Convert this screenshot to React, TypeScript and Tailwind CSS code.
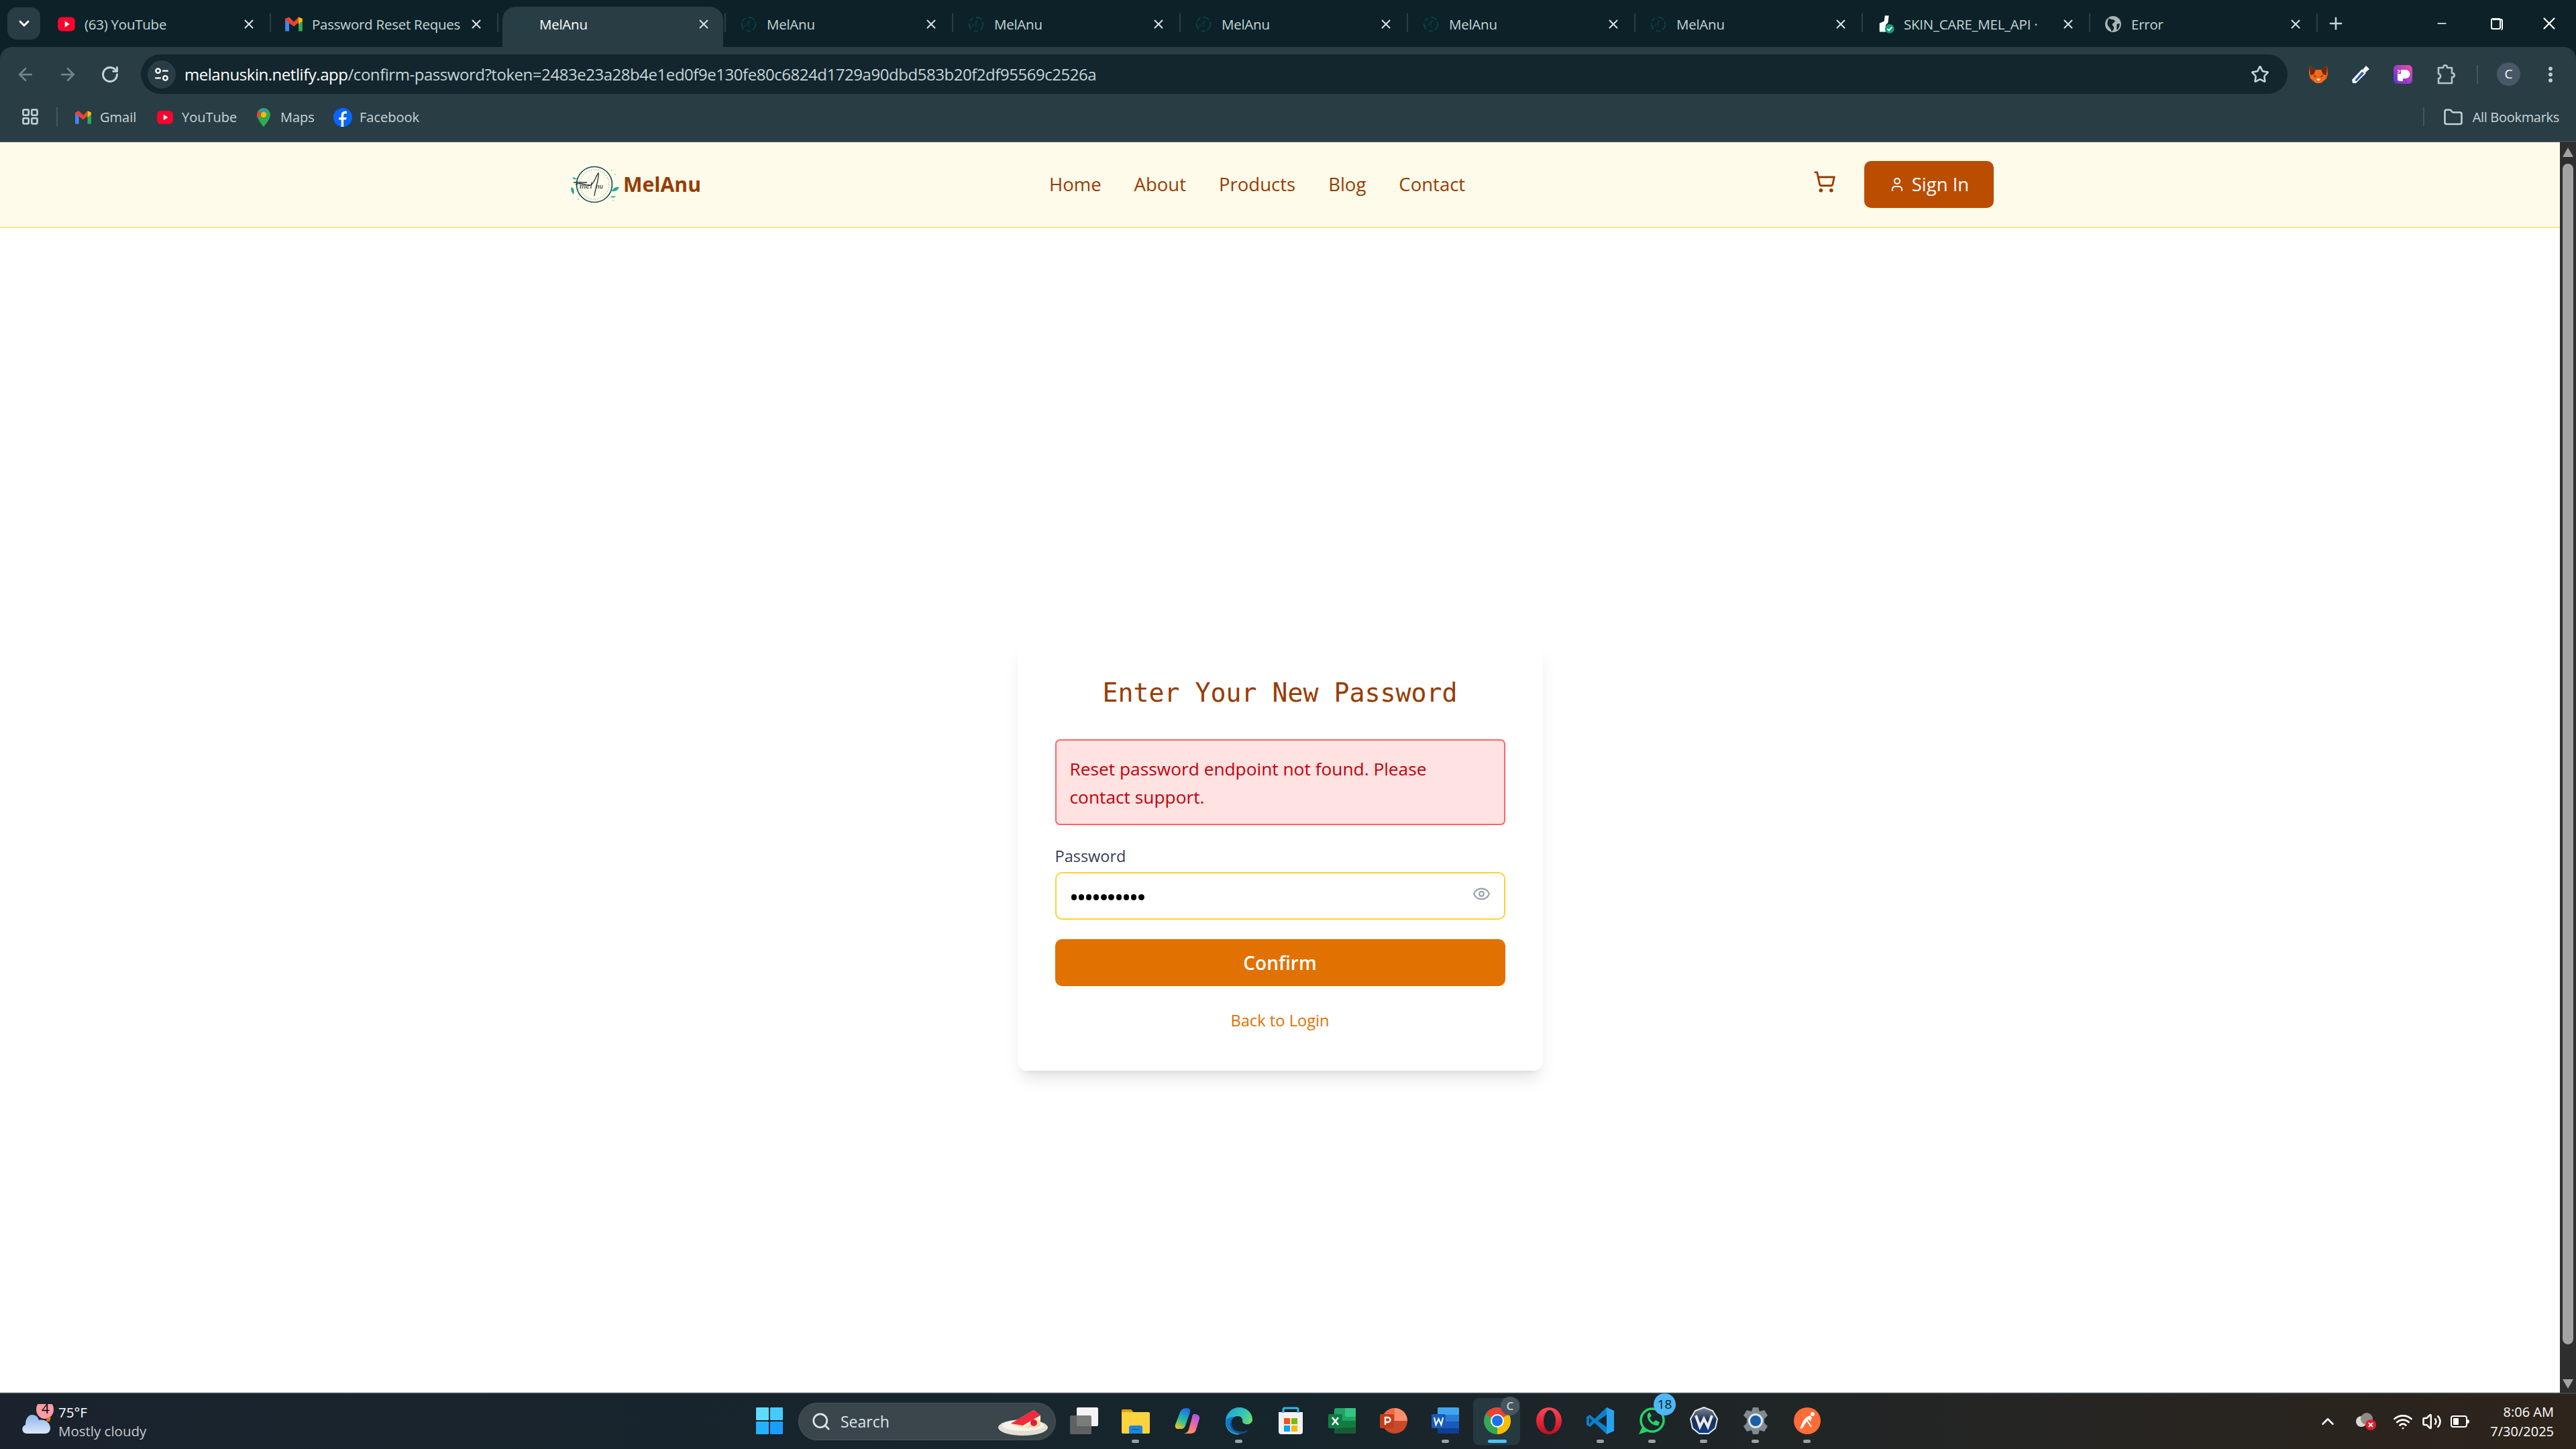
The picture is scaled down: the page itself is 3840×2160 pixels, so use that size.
import React from "react";
import { ArrowLeft, ArrowRight, RotateCw, Star, Eye, ShoppingCart, User, X, Plus, Minus, ChevronDown, ChevronUp, Folder, Search, Wifi, Volume2, EllipsisVertical, LayoutGrid } from "lucide-react";

const ui = "font-['Open_Sans',sans-serif]";

function Youtube({ size = 24 }: { size?: number }) {
  return (
    <svg width={size} height={size} viewBox="0 0 24 24">
      <rect x="1" y="3" width="22" height="18" rx="5" fill="#f8042e" />
      <path d="M10 8l6 4-6 4z" fill="#fff" />
    </svg>
  );
}

function Gmail({ size = 26 }: { size?: number }) {
  return (
    <svg width={size} height={size} viewBox="0 0 24 24" fill="none">
      <path d="M1 6v15h5V10z" fill="#4285f4" />
      <path d="M23 6v15h-5V10z" fill="#34a853" />
      <path d="M1 5l5-2 6 6 6-6 0 7-6 5-11-8z" fill="#ea4335" />
      <path d="M18 3l5 2v3l-5 4z" fill="#fbbc04" />
    </svg>
  );
}

function Spinner() {
  return (
    <svg width="26" height="26" viewBox="0 0 24 24" fill="none" stroke="#0d4f4c" strokeWidth="1.2">
      <circle cx="12" cy="12" r="9.5" strokeDasharray="9 3 6 4" />
      <path d="M5 15c4-1 8-6 10-9M12 7v9" strokeWidth="0.7" />
    </svg>
  );
}

function LogoMark() {
  return (
    <svg width="74" height="60" viewBox="0 0 74 60" fill="none">
      <circle cx="36" cy="30" r="26.5" stroke="#14524e" strokeWidth="1.7" />
      <circle cx="36" cy="30" r="22" stroke="#9cb5ae" strokeWidth="1.2" strokeDasharray="1.5 2" />
      <path d="M8 30c10-5 16 3 22 1s8-14 12-18c2 5-5 24-6 34M5 27c7-1 14 0 20 0" stroke="#1e2a2c" strokeWidth="1.3" />
      <text x="14" y="36" fontSize="13" fontStyle="italic" fill="#17282a" fontFamily="'Liberation Serif',serif">mel</text>
      <text x="38" y="36" fontSize="11" fontStyle="italic" fill="#17282a" fontFamily="'Liberation Serif',serif">nu</text>
      <path d="M2 34c3 1 5 5 3 11-3-3-5-7-3-11zM62 40c2-5 6-7 11-6-2 5-6 7-11 6zM3 20c3-1 5 0 7 2-3 1-5 0-7-2zM60 48c3-1 6-1 8 0-3 2-6 2-8 0z" fill="#2aa894" />
      <g fill="#8fd0c4">
        <circle cx="62" cy="9" r="1" /><circle cx="67" cy="15" r="1" /><circle cx="12" cy="52" r="1" /><circle cx="64" cy="54" r="1" />
      </g>
    </svg>
  );
}

function Tab({ title, icon, active }: { title: string; icon: React.ReactNode; active?: boolean }) {
  return (
    <div className="relative flex h-[60px] w-[339px] flex-none items-center pb-[8px] pl-[20px] pr-[20px]">
      {active && <div className="absolute inset-y-0 left-[6px] right-[4px] rounded-t-[20px] bg-[#293d45]" />}
      <span className="relative flex w-[28px] flex-none items-center justify-center">{icon}</span>
      <span className={`relative ml-[13px] w-[226px] flex-none whitespace-nowrap text-[20.500px] tracking-[-0.25px] ${active ? "text-white" : "text-[#c4d5d8]"}`}>{title}</span>
      <X size={22} strokeWidth={2.2} className="relative ml-[8px] flex-none text-[#d7e3e5]" />
      <span className="absolute right-0 top-[10px] h-[28px] w-[2px] bg-[#2b3f47]" />
    </div>
  );
}

function Bookmark({ icon, label, width }: { icon: React.ReactNode; label: string; width: string }) {
  return (
    <div className={`flex flex-none items-center ${width}`}>
      <span className="flex w-[28px] flex-none justify-center">{icon}</span>
      <span className="ml-[11px] text-[20px] text-[#c8d6d9]">{label}</span>
    </div>
  );
}

function TaskIcon({ children, dot, active }: { children: React.ReactNode; dot?: boolean; active?: boolean }) {
  return (
    <div className="relative flex h-[70px] w-[77px] flex-none items-center justify-center">
      {active && <span className="absolute inset-y-0 left-[3px] right-[4px] rounded-[8px] bg-[#263840]" />}
      <svg width="42" height="42" viewBox="0 0 42 42" fill="none" className="relative mb-[2px]">{children}</svg>
      {dot && <span className="absolute bottom-[3px] h-[5px] w-[11px] rounded-full bg-[#98a3a8]" />}
      {active && <span className="absolute bottom-[3px] h-[5px] w-[28px] rounded-full bg-[#4cc2ff]" />}
    </div>
  );
}

export default function App() {
  return (
    <div className={`flex h-[2160px] w-[3840px] flex-col overflow-hidden bg-[#0c2228] ${ui}`}>
      {/* tab strip */}
      <div className="flex h-[70px] flex-none items-end bg-[#0c2228]">
        <div className="mb-[11px] ml-[11px] flex h-[48px] w-[49px] flex-none items-center justify-center rounded-[14px] bg-[#293d45]">
          <ChevronDown size={24} strokeWidth={3} className="text-white" />
        </div>
        <div className="ml-[5px] flex">
          <Tab title="(63) YouTube" icon={<Youtube size={28} />} />
          <Tab title="Password Reset Reques" icon={<Gmail size={28} />} />
          <Tab title="MelAnu" icon={<Spinner />} active />
          <Tab title="MelAnu" icon={<Spinner />} />
          <Tab title="MelAnu" icon={<Spinner />} />
          <Tab title="MelAnu" icon={<Spinner />} />
          <Tab title="MelAnu" icon={<Spinner />} />
          <Tab title="MelAnu" icon={<Spinner />} />
          <Tab
            title="SKIN_CARE_MEL_API ·"
            icon={
              <svg width="28" height="30" viewBox="0 0 24 26">
                <path d="M4 23V12l6-3 1-7 5 0-1 9-3 3v9z" fill="#fff" />
                <circle cx="17" cy="19" r="6" fill="#0f9d75" />
                <path d="M14 19l2.200 2.200L20 16.800" stroke="#fff" strokeWidth="1.6" fill="none" />
              </svg>
            }
          />
          <Tab
            title="Error"
            icon={
              <svg width="26" height="26" viewBox="0 0 24 24">
                <circle cx="12" cy="12" r="11" fill="#aab4b8" />
                <path d="M6 4c3 2 6 1 8 3s-2 3-3 5 3 3 2 6-2 3-3 4c-1-4-3-5-5-8s0-7 1-10zM17 12l4-1c0 4-1 7-4 9z" fill="#0c2228" />
              </svg>
            }
          />
        </div>
        <div className="mb-[11px] ml-[13px] flex h-[48px] items-center">
          <Plus size={28} strokeWidth={2.2} className="text-[#c4d5d8]" />
        </div>
        <div className="ml-auto mb-[23px] flex h-[24px] items-center text-white">
          <span className="flex w-[80px] justify-center"><Minus size={20} strokeWidth={2} /></span>
          <span className="relative flex w-[80px] justify-center">
            <span className="h-[17px] w-[15px] rounded-[3px] border-2 border-white" />
            <span className="absolute left-[36px] top-[1px] h-[17px] w-[15px] rounded-[3px] border-t-2 border-r-2 border-white" />
          </span>
          <span className="flex w-[80px] justify-center"><X size={30} strokeWidth={1.7} /></span>
        </div>
      </div>

      {/* toolbar */}
      <div className="flex h-[70px] flex-none items-center rounded-t-[18px] bg-[#293d45] pt-[11px]">
        <div className="flex w-[210px] flex-none items-center text-[#c4d5d8]">
          <ArrowLeft size={30} strokeWidth={2.2} className="ml-[23px] text-[#70848b]" />
          <ArrowRight size={30} strokeWidth={2.2} className="ml-[33px] text-[#70848b]" />
          <RotateCw size={28} strokeWidth={2.4} className="ml-[34px]" />
        </div>
        <div className="flex h-[59px] w-[3200px] flex-none items-center rounded-full bg-[#13262e] pl-[10px]">
          <div className="flex h-[42px] w-[42px] flex-none items-center justify-center rounded-full bg-[#293d45]">
            <svg width="26" height="26" viewBox="0 0 24 24" fill="none" stroke="#fff" strokeWidth="2.2">
              <circle cx="7" cy="7" r="3" />
              <path d="M13 7h8M3 17h8" />
              <circle cx="17" cy="17" r="3" />
            </svg>
          </div>
          <div className="ml-[13px] flex-1 whitespace-nowrap text-[24px] tracking-[-0.46px] text-white">
            melanuskin.netlify.app<span className="text-[#c4d5d8]">/confirm-password?token=2483e23a28b4e1ed0f9e130fe80c6824d1729a90dbd583b20f2df95569c2526a</span>
          </div>
          <Star size={28} strokeWidth={2.2} className="mr-[27px] flex-none text-[#c8d6d9]" />
        </div>
        <div className="flex flex-1 items-center text-[#c4d5d8]">
          <svg width="28" height="28" viewBox="0 0 28 28" className="ml-[32px] flex-none">
            <path d="M1 1l9 6h8l9-6 1 12-2 7-7 6-2 1h-6l-2-1-7-6-2-7z" fill="#f6681a" />
            <path d="M1 1l9 6-3 7-5 1zM27 1l-9 6 3 7 5 1z" fill="#6e2a10" />
            <path d="M11 21l3 3 3-3-3-1z" fill="#f2efe9" />
            <path d="M7 15l4 2-2 1zM21 15l-4 2 2 1z" fill="#2a1a14" />
          </svg>
          <svg width="30" height="30" viewBox="0 0 30 30" className="ml-[34px] flex-none" fill="none">
            <path d="M3 28l-1-5L17 7l6 6L8 28z" fill="#f2f5f6" />
            <path d="M6 24l11-13 3 2L9 25z" fill="#2f50bb" />
            <path d="M18 8l5-6 5 5-6 5z" fill="#fff" />
          </svg>
          <svg width="28" height="28" viewBox="0 0 28 28" className="ml-[34px] flex-none">
            <defs>
              <linearGradient id="pg" x1="0" y1="1" x2="1" y2="0">
                <stop offset="0" stopColor="#5a2fe0" />
                <stop offset="1" stopColor="#ee4fa8" />
              </linearGradient>
            </defs>
            <rect width="28" height="28" rx="6" fill="url(#pg)" />
            <path d="M6 13h5V7h7a6.500 6.500 0 010 13h-4v3a1 1 0 01-1 1H9c-2 0-3-1-3-3z" fill="#fff" />
            <path d="M6 7h3L6 10zM6 11.500L10 7v3l-4 3z" fill="#f9c9e6" />
          </svg>
          <svg width="30" height="32" viewBox="0 0 30 32" fill="none" stroke="#b4c6ca" strokeWidth="2.600" className="ml-[36px] flex-none" strokeLinejoin="round">
            <path d="M3 6h7c0-5 6-5 6 0h7v8c5 0 5 6 0 6v9H3v-7c4 0 4-7 0-7z" />
          </svg>
          <span className="ml-[30px] h-[28px] w-[2px] flex-none bg-[#44575f]" />
          <span className="ml-[28px] flex h-[35px] w-[35px] flex-none items-center justify-center rounded-full bg-[#475964] text-[19px] text-white">C</span>
          <EllipsisVertical size={30} strokeWidth={2.6} className="ml-[30px] flex-none" />
        </div>
      </div>

      {/* bookmarks */}
      <div className="flex h-[72px] flex-none items-start border-b-2 border-[#3e4a4c] bg-[#293d45] pt-[20px]">
        <LayoutGrid size={28} strokeWidth={2.2} className="ml-[31px] flex-none text-[#c4d5d8]" />
        <span className="ml-[25px] h-[28px] w-[2px] flex-none bg-[#44575f]" />
        <div className="ml-[24px] flex">
          <Bookmark icon={<Gmail size={26} />} label="Gmail" width="w-[122px]" />
          <Bookmark icon={<Youtube size={26} />} label="YouTube" width="w-[147px]" />
          <Bookmark icon={<svg width="24" height="30" viewBox="0 0 24 30"><path d="M12 1a10 10 0 00-10 10c0 7 10 18 10 18s10-11 10-18A10 10 0 0012 1z" fill="#34a853" /><path d="M4 5l5 5-6 6c-2-4-1-8 1-11z" fill="#ea4335" /><path d="M9 2l7 2-6 5z" fill="#4285f4" /><circle cx="12" cy="11" r="4" fill="#fbbc04" /></svg>} label="Maps" width="w-[118px]" />
          <Bookmark icon={<svg width="28" height="28" viewBox="0 0 24 24"><circle cx="12" cy="12" r="12" fill="#0866ff" /><path d="M10 24v-9H7v-3h3V9c0-3 2-5 5-5h2v3h-2c-1 0-2 1-2 2v3h4l-1 3h-3v9z" fill="#fff" /></svg>} label="Facebook" width="w-[120px]" />
        </div>
        <span className="ml-auto h-[28px] w-[2px] flex-none bg-[#44575f]" />
        <Folder size={30} strokeWidth={2} className="ml-[28px] flex-none text-[#c4d5d8]" />
        <span className="ml-[14px] mr-[25px] text-[20px] tracking-[-0.3px] text-[#c8d6d9]">All Bookmarks</span>
      </div>

      {/* page */}
      <div className="flex min-h-0 flex-1 bg-white">
        <div className="flex min-w-0 flex-1 flex-col">
          <header className="flex h-[128px] flex-none items-center justify-between border-b-2 border-amber-200 bg-amber-50 pl-[850px] pr-[844px]">
            <div className="flex items-center">
              <LogoMark />
              <span className="ml-[5px] text-[30.200px] font-bold text-amber-800">MelAnu</span>
            </div>
            <nav className="flex gap-[49px] text-[27.500px] font-medium text-amber-800">
              <span>Home</span>
              <span>About</span>
              <span>Products</span>
              <span>Blog</span>
              <span>Contact</span>
            </nav>
            <div className="flex items-center">
              <ShoppingCart size={34} strokeWidth={2} className="mb-[8px] text-amber-800" />
              <button className="ml-[42px] flex h-[70px] w-[193px] items-center justify-center gap-[10px] rounded-[10px] bg-amber-700 text-[27.500px] font-medium text-white">
                <User size={24} strokeWidth={2} />
                Sign In
              </button>
            </div>
          </header>

          <main className="flex flex-1 justify-center pt-[620px]">
            <div className="flex h-[636px] w-[783px] flex-col rounded-[14px] bg-white px-[56px] pt-[53px] shadow-[0_17px_26px_-5px_rgba(0,0,0,0.1),0_7px_10px_-7px_rgba(0,0,0,0.1)]">
              <h1 className="text-center font-['DejaVu_Sans_Mono',monospace] text-[38.200px] leading-[40px] text-amber-800">Enter Your New Password</h1>
              <div className="mt-[49px] h-[128px] rounded-[7px] border-2 border-red-400 bg-red-100 pl-[20px] pr-[40px] pt-[21px] text-[26.300px] leading-[42px] text-red-700">
                Reset password endpoint not found. Please contact support.
              </div>
              <label className="mt-[30px] text-[23.500px] font-medium leading-[32px] text-gray-700">Password</label>
              <div className="relative mt-[8px] flex h-[71px] items-center rounded-[10px] border-2 border-amber-300 px-[22px]">
                <span className="flex gap-[2.800px] pt-[4px]">
                  {Array.from({ length: 10 }).map((_, i) => (
                    <span key={i} className="h-[8.400px] w-[8.400px] rounded-full bg-black" />
                  ))}
                </span>
                <Eye size={27} strokeWidth={2} className="absolute right-[20px] top-[17px] text-gray-400" />
              </div>
              <button className="mt-[29px] h-[70px] rounded-[10px] bg-amber-600 text-[28px] font-semibold text-white">Confirm</button>
              <div className="mt-[34px] text-center text-[23.700px] text-amber-600">Back to Login</div>
            </div>
          </main>
        </div>

        {/* scrollbar */}
        <div className="flex w-[24px] flex-none flex-col items-center bg-[#2e2e2e] pt-[8px]">
          <span className="h-0 w-0 border-x-[8px] border-b-[14px] border-x-transparent border-b-[#a3a3a3]" />
          <span className="mt-[10px] h-[1760px] w-[16px] rounded-full bg-[#a3a3a3]" />
          <span className="mt-auto mb-[6px] h-0 w-0 border-x-[8px] border-t-[14px] border-x-transparent border-t-[#a3a3a3]" />
        </div>
      </div>

      {/* taskbar */}
      <div className="flex h-[84px] flex-none items-center border-t-2 border-[#3a4347] bg-linear-to-r from-[#1a232d] via-[#16252c] to-[#2e241b]">
        <div className="relative flex w-[1108px] flex-none items-center pl-[32px]">
          <svg width="48" height="52" viewBox="0 0 48 52" className="flex-none">
            <defs>
              <linearGradient id="cloud" x1="0" y1="0" x2="0" y2="1">
                <stop offset="0" stopColor="#8fb4ec" />
                <stop offset="1" stopColor="#dbe7f7" />
              </linearGradient>
            </defs>
            <ellipse cx="35" cy="8" rx="13" ry="14" fill="#fb9ba4" />
            <path d="M38 20l6 0-2 6-5 0z" fill="#e8701a" />
            <path d="M8 44c-8 0-9-11-2-13 0-9 4-15 10-15 6 0 9 4 10 8 8-2 16 3 17 11 0 6-3 9-8 9z" fill="url(#cloud)" />
          </svg>
          <span className="absolute left-[62px] top-[-5px] text-[20px] leading-[28px] text-black">4</span>
          <div className="ml-[7px] flex flex-col text-[20.500px] leading-[28px]">
            <span className="text-white">75°F</span>
            <span className="text-[#c6c9cc]">Mostly cloudy</span>
          </div>
        </div>

        <div className="flex items-center">
          <TaskIcon>
            <rect x="1" y="1" width="19" height="19" rx="1" fill="#5fdcff" />
            <rect x="22" y="1" width="19" height="19" rx="1" fill="#45ccff" />
            <rect x="1" y="22" width="19" height="19" rx="1" fill="#24b1ff" />
            <rect x="22" y="22" width="19" height="19" rx="1" fill="#1b9dff" />
          </TaskIcon>
          <div className="ml-[5px] mr-[3px] flex h-[56px] w-[384px] flex-none items-center rounded-full border border-[#4a555a] bg-[#3a464c] pl-[18px]">
            <Search size={30} strokeWidth={2.2} className="flex-none text-[#dde3e5]" />
            <span className="ml-[14px] flex-1 text-[23px] text-[#dde3e5]">Search</span>
            <svg width="76" height="42" viewBox="0 0 76 42" className="mr-[10px] flex-none">
              <ellipse cx="38" cy="30" rx="37" ry="12" fill="#e4ded2" />
              <ellipse cx="38" cy="27" rx="31" ry="8" fill="#f6f3ec" />
              <path d="M20 24L54 4l10 8v16c-14 5-32 3-44-4z" fill="#f8dca6" />
              <path d="M20 24L54 4l10 8-26 15z" fill="#ee2b40" />
              <path d="M38 27l26-15v5L38 31z" fill="#fff2d8" />
              <circle cx="54" cy="23" r="5" fill="#d9213c" />
            </svg>
          </div>
          <TaskIcon>
            <rect x="10" y="1" width="32" height="28" rx="2" fill="#f3f3f3" />
            <rect x="0" y="13" width="32" height="28" rx="2" fill="#6a6a6a" fillOpacity="0.88" />
          </TaskIcon>
          <TaskIcon dot>
            <path d="M0 6a2 2 0 012-2h12l3 4h23a2 2 0 012 2v28a2 2 0 01-2 2H2a2 2 0 01-2-2z" fill="#ffd23f" />
            <path d="M0 6a2 2 0 012-2h12l3 4H0z" fill="#e0a10f" />
            <path d="M11 40v-9a3 3 0 013-3h14a3 3 0 013 3v9z" fill="#1c87d8" />
            <rect x="16" y="33" width="10" height="1.500" fill="#0e5ea6" />
          </TaskIcon>
          <TaskIcon>
            <defs>
              <linearGradient id="cpl" x1="0.6" y1="0" x2="0.2" y2="1">
                <stop offset="0" stopColor="#1f6fe8" />
                <stop offset="0.55" stopColor="#25c0a0" />
                <stop offset="1" stopColor="#f5c518" />
              </linearGradient>
              <linearGradient id="cpr" x1="0.8" y1="0" x2="0.3" y2="1">
                <stop offset="0" stopColor="#a457e8" />
                <stop offset="0.55" stopColor="#f06aa0" />
                <stop offset="1" stopColor="#ff9a4d" />
              </linearGradient>
            </defs>
            <path d="M20 2c-6 0-9 3-11 9L3 27c-1 4 1 6 5 6h4c3 0 5-2 6-5l7-20c1-3-1-6-5-6z" fill="url(#cpl)" />
            <path d="M31 11c5 0 9 2 8 7l-5 16c-1 4-4 6-8 6H15c4 0 7-3 8-6l5-18c0-2 1-5 3-5z" fill="url(#cpr)" />
          </TaskIcon>
          <TaskIcon dot>
            <defs>
              <linearGradient id="edg" x1="0" y1="0" x2="1" y2="0.6">
                <stop offset="0" stopColor="#1b9de2" />
                <stop offset="0.6" stopColor="#35c6b4" />
                <stop offset="1" stopColor="#7fe05d" />
              </linearGradient>
            </defs>
            <path d="M1 20C2 9 11 1 21 1c11 0 20 8 20 18 0 5-5 8-10 7-4-1-5-3-5-6 0-3-2-6-7-6-7 0-11 7-9 14 1 7 7 12 13 13-5 1-8 0-11-1C5 37 0 30 1 20z" fill="url(#edg)" />
            <path d="M1 20c0 10 6 18 15 20 4 1 10 1 19-5-8 4-17 3-22-2-5-6-4-14 1-18-6 0-11 2-13 5z" fill="#0f78c8" />
            <path d="M14 15c-5 4-6 12-1 18 4 5 13 7 22 2-5 5-10 6-14 5-8-2-12-7-13-13 0-5 2-10 6-12z" fill="#114a94" />
          </TaskIcon>
          <TaskIcon>
            <path d="M3 8h36v29a4 4 0 01-4 4H7a4 4 0 01-4-4z" fill="#f1f1f1" />
            <path d="M10 9V4a2 2 0 012-2h18a2 2 0 012 2v5" stroke="#2fb6ea" strokeWidth="3" />
            <rect x="11" y="17" width="9" height="9" fill="#f25022" />
            <rect x="22" y="17" width="9" height="9" fill="#7fba00" />
            <rect x="11" y="28" width="9" height="9" fill="#00a4ef" />
            <rect x="22" y="28" width="9" height="9" fill="#ffb900" />
          </TaskIcon>
          <TaskIcon>
            <rect x="9" y="2" width="32" height="38" rx="3" fill="#21a366" />
            <rect x="25" y="2" width="16" height="13" fill="#33c481" />
            <rect x="9" y="21" width="32" height="10" fill="#107c41" />
            <rect x="9" y="31" width="32" height="9" fill="#185c37" />
            <rect x="0" y="11" width="21" height="21" rx="2" fill="#107c41" />
            <path d="M6 16l9 11M15 16l-9 11" stroke="#fff" strokeWidth="2.600" />
          </TaskIcon>
          <TaskIcon>
            <circle cx="22" cy="21" r="19" fill="#c9492a" />
            <path d="M22 2a19 19 0 0119 19H22z" fill="#ff8f6b" />
            <path d="M22 2a19 19 0 00-19 19h19z" fill="#ed6c47" />
            <rect x="0" y="11" width="21" height="21" rx="2" fill="#c43e1c" />
            <path d="M8 27V16h4a3.500 3.500 0 010 7H8" stroke="#fff" strokeWidth="2.400" fill="none" />
          </TaskIcon>
          <TaskIcon dot>
            <rect x="9" y="1" width="32" height="39" rx="3" fill="#2b7cd3" />
            <rect x="9" y="1" width="32" height="11" rx="2" fill="#41a5ee" />
            <rect x="9" y="22" width="32" height="10" fill="#185abd" />
            <rect x="9" y="32" width="32" height="8" fill="#103f91" />
            <rect x="0" y="11" width="21" height="21" rx="2" fill="#185abd" />
            <path d="M4 16l2.500 11 4-9 4 9 2.500-11" stroke="#fff" strokeWidth="2" fill="none" />
          </TaskIcon>
          <div className="relative">
            <TaskIcon active>
              <circle cx="21" cy="21" r="20" fill="#34a853" />
              <path d="M21 21L3.700 11A20 20 0 0138.300 11z" fill="#ea4335" />
              <path d="M21 21L38.300 11A20 20 0 0121 41z" fill="#fbbc04" />
              <circle cx="21" cy="21" r="10" fill="#fff" />
              <circle cx="21" cy="21" r="8" fill="#1a73e8" />
            </TaskIcon>
            <span className="absolute right-[5px] top-[-2px] flex h-[28px] w-[28px] items-center justify-center rounded-full bg-[#47565e] text-[17px] font-semibold text-[#c8d0d4]">C</span>
          </div>
          <TaskIcon>
            <defs>
              <linearGradient id="op" x1="0" y1="0" x2="0" y2="1">
                <stop offset="0" stopColor="#ff4757" />
                <stop offset="1" stopColor="#c70a1d" />
              </linearGradient>
            </defs>
            <ellipse cx="21" cy="21" rx="19" ry="20" fill="url(#op)" />
            <ellipse cx="22" cy="21" rx="9" ry="16" fill="#16252c" />
          </TaskIcon>
          <TaskIcon dot>
            <path d="M30 1L12 18 5 12 0 15v12l5 3 7-6 18 17 11-5V6z" fill="#0e7fc9" />
            <path d="M30 12L17 21l13 9z" fill="#16252c" />
            <path d="M4 16l4 5-4 5z" fill="#16252c" />
            <path d="M30 1l11 5v30l-11 5z" fill="#24a4ee" />
            <path d="M30 12v18l-4-3V15z" fill="#16252c" />
          </TaskIcon>
          <div className="relative">
            <TaskIcon dot>
              <circle cx="21" cy="20" r="17" fill="none" stroke="#25d366" strokeWidth="3.500" />
              <path d="M7 28l-6 13 13-4z" fill="#25d366" />
              <path d="M14 11c-2 9 7 18 16 17l2-5-6-3-3 3c-3-1-5-4-6-7l3-2-3-6z" fill="#25d366" />
            </TaskIcon>
            <span className="absolute right-[3px] top-[-7px] flex h-[33px] w-[33px] items-center justify-center rounded-full bg-[#4db8f5] text-[19px] text-[#0e1a20]">18</span>
          </div>
          <TaskIcon dot>
            <defs>
              <linearGradient id="wn" x1="0" y1="0" x2="0" y2="1">
                <stop offset="0" stopColor="#7c8896" />
                <stop offset="0.5" stopColor="#1d2d52" />
                <stop offset="1" stopColor="#0f3f94" />
              </linearGradient>
            </defs>
            <path d="M21 1l13 5 7 12-3 14-10 8H14L4 32 1 18 8 6z" fill="url(#wn)" stroke="#e8ecef" strokeWidth="2" />
            <path d="M9 13l6 17 6-12 6 12 6-17" stroke="#e8ecef" strokeWidth="4" fill="none" />
          </TaskIcon>
          <TaskIcon dot>
            <path d="M17 1h8l2 6 7-2 5 8-5 5v6l5 5-5 8-7-2-2 6h-8l-2-6-7 2-5-8 5-5v-6l-5-5 5-8 7 2z" fill="#7f8a92" />
            <circle cx="21" cy="21" r="11" fill="#e5e8ea" />
            <circle cx="21" cy="21" r="8" fill="#1b5fa8" />
          </TaskIcon>
          <TaskIcon dot>
            <circle cx="21" cy="21" r="20" fill="#ff6c37" />
            <path d="M10 33l4-1 4-7 5-6 3 3 2-6-3-3-6 3-5 7z" fill="#fff" />
            <circle cx="29" cy="11" r="3" fill="#fff" />
            <path d="M21 21l6 9" stroke="#fff" strokeWidth="2" />
          </TaskIcon>
        </div>

        <div className="ml-auto flex items-center text-white">
          <ChevronUp size={30} strokeWidth={2} className="mr-[26px]" />
          <svg width="32" height="30" viewBox="0 0 32 30" className="mr-[24px]">
            <circle cx="9" cy="15" r="8" fill="#d9d9d4" />
            <circle cx="17" cy="11" r="9" fill="#8d8d86" />
            <circle cx="23" cy="20" r="8" fill="#e01f30" />
            <path d="M20 17l6 6M26 17l-6 6" stroke="#fff" strokeWidth="1.8" />
          </svg>
          <Wifi size={30} strokeWidth={2.2} className="mr-[13px]" />
          <Volume2 size={30} strokeWidth={2} className="mr-[13px]" />
          <span className="relative mr-[34px] flex h-[18px] w-[25px] items-center rounded-[4px] border-2 border-white p-[2px]">
            <span className="h-full w-[8px] rounded-[1px] bg-white" />
            <span className="absolute -right-[5px] h-[6px] w-[3px] rounded-r bg-white" />
          </span>
          <div className="mr-[33px] flex flex-col items-end text-[20px] leading-[29px]">
            <span>8:06 AM</span>
            <span>7/30/2025</span>
          </div>
        </div>
      </div>
    </div>
  );
}
